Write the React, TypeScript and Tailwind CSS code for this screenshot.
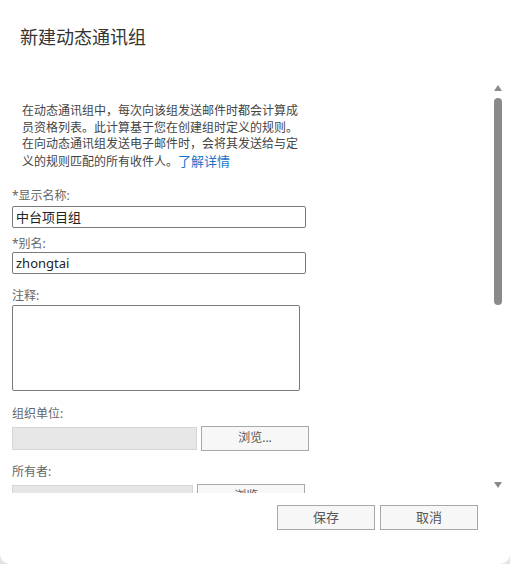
import React from 'react';

const font = { fontFamily: '"Noto Sans", "Noto Sans CJK SC", sans-serif' };

function Label({ children, className = '' }: { children: React.ReactNode; className?: string }) {
  return <div className={`text-[12px] leading-4 text-[#666] ${className}`}>{children}</div>;
}

function TextInput({ value, className = '' }: { value: string; className?: string }) {
  return (
    <div
      className={`h-[22px] w-[294px] rounded-[2px] border border-[#7a7a7a] bg-white px-[3px] text-[13px] leading-[20px] text-[#222] ${className}`}
    >
      {value}
    </div>
  );
}

function BrowseRow({ inputW, btnW, gap, className = '' }: { inputW: string; btnW: string; gap: string; className?: string }) {
  return (
    <div className={`flex items-center ${gap} ${className}`}>
      <div className={`h-[23px] ${inputW} border border-[#d6d6d6] bg-[#e6e6e6]`} />
      <button className={`h-[25px] ${btnW} border border-[#a8a8a8] bg-[#f7f7f7] text-[12px] text-[#555]`}>
        浏览...
      </button>
    </div>
  );
}

export default function App() {
  return (
    <div className="h-[564px] w-[510px] bg-[#e4e4e4]" style={font}>
      <div className="flex h-full w-full flex-col rounded-b-[10px] bg-white">
        <h1 className="pl-[20px] pt-[24px] text-[18px] leading-[26px] font-normal text-[#333]">新建动态通讯组</h1>

        {/* scrolling form body */}
        <div className="mt-[35px] flex h-[408px]">
          <div className="flex-1 overflow-hidden">
            <p className="mt-[18px] w-[300px] pl-[22px] text-[12px] leading-[16.7px] text-[#444]">
              在动态通讯组中，每次向该组发送邮件时都会计算成员资格列表。此计算基于您在创建组时定义的规则。在向动态通讯组发送电子邮件时，会将其发送给与定义的规则匹配的所有收件人。
              <span className="text-[13px] text-[#1a73c8]">了解详情</span>
            </p>

            <div className="pl-[12px]">
              <Label className="mt-[17px]">*显示名称:</Label>
              <TextInput value="中台项目组" className="mt-[2px]" />

              <Label className="mt-[8px]">*别名:</Label>
              <TextInput value="zhongtai" className="mt-0" />

              <Label className="mt-[14px]">注释:</Label>
              <div className="mt-[1px] h-[86px] w-[288px] rounded-[2px] border border-[#7a7a7a]" />

              <Label className="mt-[15px]">组织单位:</Label>
              <BrowseRow inputW="w-[185px]" btnW="w-[108px]" gap="gap-[4px]" className="mt-[4px]" />

              <Label className="mt-[13px]">所有者:</Label>
              <BrowseRow inputW="w-[181px]" btnW="w-[108px]" gap="gap-[4px]" className="mt-[4px]" />
            </div>
          </div>

          {/* scrollbar */}
          <div className="mr-[8px] flex w-[8px] flex-col items-center">
            <svg width="8" height="6" viewBox="0 0 8 6" className="mt-0">
              <path d="M4 0 L8 6 L0 6 Z" fill="#8a8a8a" />
            </svg>
            <div className="mt-[7px] h-[207px] w-[8px] rounded-full bg-[#8a8a8a]" />
            <div className="flex-1" />
            <svg width="8" height="6" viewBox="0 0 8 6" className="mb-[5px]">
              <path d="M0 0 L8 0 L4 6 Z" fill="#8a8a8a" />
            </svg>
          </div>
        </div>

        <div className="mt-[12px] flex justify-end gap-[5px] pr-[32px]">
          <button className="h-[25px] w-[98px] border border-[#a8a8a8] bg-[#f7f7f7] text-[13px] text-[#555]">保存</button>
          <button className="h-[25px] w-[98px] border border-[#a8a8a8] bg-[#f7f7f7] text-[13px] text-[#555]">取消</button>
        </div>
      </div>
    </div>
  );
}
